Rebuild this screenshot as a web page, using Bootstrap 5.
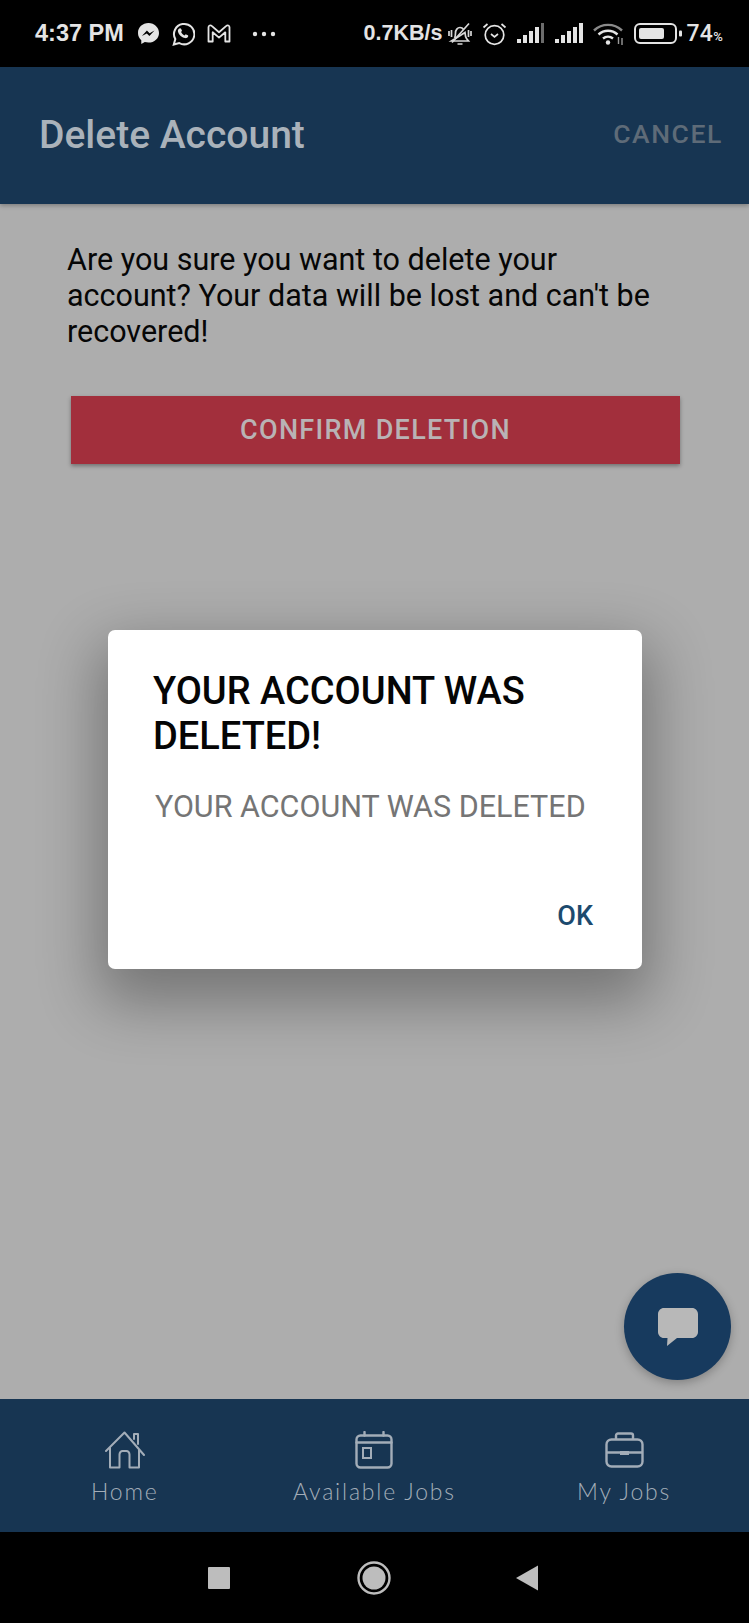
<!DOCTYPE html>
<html lang="en">
<head>
    <meta charset="UTF-8">
    <meta name="viewport" content="width=device-width, initial-scale=1.0">
    <title>Delete Account</title>
    <link href="https://cdn.jsdelivr.net/npm/bootstrap@5.3.0/dist/css/bootstrap.min.css" rel="stylesheet">
    <script src="https://cdn.jsdelivr.net/npm/bootstrap@5.3.0/dist/js/bootstrap.bundle.min.js"></script>
    <style>
        body {
            margin: 0;
            background: #000;
            font-family: Roboto, "Liberation Sans", sans-serif;
        }

        .phone {
            width: 749px;
            height: 1623px;
            overflow: hidden;
        }

        /* status bar */
        .status-bar {
            height: 67px;
            flex: none;
            background: #000;
            color: #e4e4e4;
            padding: 0 26px 0 35px;
            font-family: "Liberation Sans", sans-serif;
            font-weight: 700;
            font-size: 21.5px;
            line-height: 1;
        }

        .status-bar svg { display: block; }

        .status-left { gap: 12px; }
        .status-right { gap: 10px; }
        .status-time { font-size: 23.5px; margin-right: 1px; }
        .status-speed { margin-right: -4px; }
        .status-dots { margin-left: 9px; }
        .status-pct {
            font-family: Roboto, sans-serif;
            font-weight: 500;
            font-size: 23px;
            letter-spacing: .3px;
            margin-left: -7px;
        }
        .status-pct span { font-size: 13px; }

        /* app bar */
        .app-bar {
            height: 137px;
            flex: none;
            background: #173552;
            padding: 0 26px 0 39px;
            box-shadow: 0 2px 4px rgba(0, 0, 0, .25);
            position: relative;
            z-index: 1;
        }

        .app-title {
            font-size: 39px;
            font-weight: 500;
            color: #aab2ba;
            margin: 0;
        }

        .app-cancel {
            font-size: 26.5px;
            font-weight: 500;
            color: #5e6b78;
            letter-spacing: 1.6px;
            margin-bottom: 3px;
        }

        /* page behind the dialog */
        .page-body {
            background: #adadad;
            padding: 38px 69px 0 67px;
        }

        .warn-text {
            font-size: 30.5px;
            line-height: 36px;
            color: #060606;
            margin: 0 0 46px;
        }

        .btn-confirm {
            display: block;
            width: 609px;
            height: 68px;
            margin-left: 4px;
            background: #a22f3c;
            color: #b9b3b5;
            border: 0;
            border-radius: 0;
            font-size: 27px;
            font-weight: 500;
            letter-spacing: 1.3px;
            box-shadow: 0 2px 4px rgba(0, 0, 0, .35);
        }

        /* dialog */
        .alert-box {
            left: 108px;
            top: 630px;
            width: 534px;
            height: 339px;
            padding: 39px 40px 0 45px;
            background: #fff;
            border-radius: 7px;
            box-shadow: 0 24px 60px 10px rgba(0, 0, 0, .32);
            z-index: 2;
        }

        .alert-heading-text {
            font-size: 38px;
            font-weight: 500;
            line-height: 45px;
            color: #050505;
            margin: 0 0 28px;
        }

        .alert-body-text {
            font-size: 30.5px;
            line-height: 40px;
            color: #757575;
            margin: 0 0 0 2px;
        }

        .alert-ok {
            right: 49px;
            bottom: 37px;
            font-size: 27px;
            font-weight: 500;
            line-height: 32px;
            color: #1c4a6e;
        }

        /* chat button */
        .chat-fab {
            left: 624px;
            top: 1273px;
            width: 107px;
            height: 107px;
            background: #173a5e;
            box-shadow: 0 3px 10px rgba(0, 0, 0, .25);
            z-index: 1;
        }

        /* bottom tabs */
        .tab-bar {
            height: 133px;
            flex: none;
            background: #173552;
            padding-top: 32px;
        }

        .tab-bar svg { display: block; margin: 0 auto 8px; }

        .tab-label {
            font-family: Lato, sans-serif;
            font-weight: 300;
            font-size: 23px;
            line-height: 28px;
            letter-spacing: 1.8px;
            color: #a3adb8;
        }

        /* android nav */
        .sys-nav {
            height: 91px;
            flex: none;
            background: #000;
            padding-top: 27px;
        }
    </style>
</head>
<body>
    <div class="phone d-flex flex-column position-relative">

        <!-- Status bar -->
        <div class="status-bar d-flex align-items-center justify-content-between">
            <div class="status-left d-flex align-items-center">
                <span class="status-time">4:37 PM</span>
                <!-- messenger -->
                <svg width="23" height="23" viewBox="0 0 23 23"><path fill="#e4e4e4" d="M11.5 1C5.6 1 1 5.3 1 10.9c0 3 1.3 5.5 3.3 7.3V22l3.5-1.9c1.2.3 2.4.5 3.7.5 5.9 0 10.5-4.3 10.5-9.7S17.4 1 11.5 1z"/><path fill="#000" d="M4.9 14l5-5.4 2.7 2.6 4.9-2.6-5.1 5.500-2.600-2.700z"/></svg>
                <!-- whatsapp -->
                <svg width="23" height="24" viewBox="0 0 23 24"><path fill="none" stroke="#e4e4e4" stroke-width="2" d="M1.800 22.500l1.500-5.400a10.200 10.200 0 1 1 3.900 3.900z"/><path fill="#e4e4e4" d="M8 6.200c.6 0 .9.100 1.200.8l.8 1.800-.9 1.300c.7 1.500 1.800 2.500 3.400 3.300l1.200-1.200 2.100 1c.5.300.5.700.3 1.300-.5 1.200-1.700 1.800-3 1.600-3.600-.6-6.500-3.400-7.200-6.800-.2-1.300.5-2.600 2.100-3.100z"/></svg>
                <!-- gmail -->
                <svg width="24" height="19" viewBox="0 0 24 19"><path fill="none" stroke="#e4e4e4" stroke-width="1.800" stroke-linejoin="round" d="M1.500 3.200c0-1.700 2-2.400 3.200-1.300L12 8.300l7.300-6.400c1.200-1.100 3.200-.4 3.200 1.300v14.300h-4.200V8.300L12 13.600 5.700 8.300v9.200H1.500z"/></svg>
                <!-- more -->
                <svg class="status-dots" width="24" height="6" viewBox="0 0 24 6" fill="#e4e4e4"><circle cx="3" cy="3" r="2.200"/><circle cx="12" cy="3" r="2.200"/><circle cx="21" cy="3" r="2.200"/></svg>
            </div>
            <div class="status-right d-flex align-items-center">
                <span class="status-speed">0.7KB/s</span>
                <!-- muted bell -->
                <svg width="24" height="24" viewBox="0 0 24 24" fill="none" stroke="#d8d8d8" stroke-width="1.700"><path d="M6.500 16c1-1.500 1-2.500 1-5 0-3 2-5.500 4.500-5.500 1.500 0 2.800.8 3.600 2M17 10.500c.2 2.500.3 4.500 1.500 6l2 2.500h-17z"/><path d="M9.500 22h5M4 20.500L21 1.500M1 9v5M3.500 8v7M20.500 8v7M23 9v5"/></svg>
                <!-- alarm -->
                <svg width="25" height="24" viewBox="0 0 25 24" fill="none" stroke="#e4e4e4" stroke-width="1.700"><circle cx="12.500" cy="13" r="9.300"/><path d="M9 12l3.500 3 3.500-3M1.500 5.500l4-3.500M23.500 5.500l-4-3.500"/></svg>
                <!-- signal -->
                <svg width="28" height="21" viewBox="0 0 28 21" fill="#e4e4e4"><rect x="0" y="16" width="4" height="4"/><rect x="6" y="12" width="4" height="8"/><rect x="12" y="8" width="4" height="12"/><rect x="18" y="4" width="4" height="16"/><rect x="24" y="0" width="3" height="20" fill="#6c6c6c"/></svg>
                <svg width="28" height="21" viewBox="0 0 28 21" fill="#e4e4e4"><rect x="0" y="16" width="4" height="4"/><rect x="6" y="12" width="4" height="8"/><rect x="12" y="8" width="4" height="12"/><rect x="18" y="4" width="4" height="16"/><rect x="24" y="0" width="4" height="20"/></svg>
                <!-- wifi -->
                <svg width="31" height="22" viewBox="0 0 31 22" fill="none"><path stroke="#8a8a8a" stroke-width="2.400" d="M1 7.500c8-7.500 20-7.500 28 0"/><path stroke="#e4e4e4" stroke-width="2.400" d="M5.500 11.500c5.500-5 13.500-5 19 0M10 15.500c3-2.500 7-2.500 10 0"/><circle cx="15" cy="19.500" r="2.200" fill="#e4e4e4"/><path stroke="#9a9a9a" stroke-width="1.400" d="M25.500 14v7M29 15v7"/></svg>
                <!-- battery -->
                <svg width="49" height="21" viewBox="0 0 49 21"><rect x="1" y="1" width="41" height="19" rx="5" fill="none" stroke="#e4e4e4" stroke-width="2"/><rect x="5" y="5" width="25" height="11" rx="2" fill="#e4e4e4"/><rect x="45" y="7.500" width="3" height="6" rx="1" fill="#e4e4e4"/></svg>
                <span class="status-pct">74<span>%</span></span>
            </div>
        </div>

        <!-- App bar -->
        <div class="app-bar d-flex align-items-center justify-content-between">
            <h1 class="app-title">Delete Account</h1>
            <span class="app-cancel">CANCEL</span>
        </div>

        <!-- Page content -->
        <div class="page-body flex-grow-1">
            <p class="warn-text">Are you sure you want to delete your account? Your data will be lost and can't be recovered!</p>
            <button type="button" class="btn btn-confirm">CONFIRM DELETION</button>
        </div>

        <!-- Bottom tabs -->
        <div class="tab-bar row g-0 text-center">
            <div class="col-4">
                <svg width="40" height="38" viewBox="0 0 40 38" fill="none" stroke="#a3adb8" stroke-width="2" stroke-linejoin="round" stroke-linecap="round"><path d="M1 20L19.500 1.500 39 24"/><path d="M5 17v19.500h9.500V23.500c0-2 1.500-3.500 3-3.500h4c1.500 0 3 1.500 3 3.500v13H34V19"/><path d="M29 8V3h4v10"/></svg>
                <div class="tab-label">Home</div>
            </div>
            <div class="col-4">
                <svg width="38" height="38" viewBox="0 0 38 38" fill="none" stroke="#a3adb8" stroke-width="2.400" stroke-linecap="round"><rect x="1.500" y="4.500" width="35" height="32" rx="4"/><path d="M9.500 1v3.500M28.500 1v3.500M1.500 11.500h35"/><rect x="8" y="17" width="8" height="10" stroke-width="2"/></svg>
                <div class="tab-label">Available Jobs</div>
            </div>
            <div class="col-4">
                <svg width="39" height="38" viewBox="0 0 39 38" fill="none" stroke="#a3adb8" stroke-width="2.400"><rect x="1.500" y="8.500" width="36" height="27" rx="5"/><path d="M11 8.500V4.500c0-1 1-2 2-2h13c1 0 2 1 2 2v4M1.500 21.500h36"/><rect x="15" y="20" width="9" height="4" fill="#a3adb8" stroke="none"/></svg>
                <div class="tab-label">My Jobs</div>
            </div>
        </div>

        <!-- Android navigation -->
        <div class="sys-nav d-flex align-items-start">
            <svg width="749" height="40" viewBox="0 0 749 40" fill="#bdbdbd"><rect x="208" y="8" width="22" height="22" rx="1"/><circle cx="374" cy="19" r="15.500" fill="none" stroke="#bdbdbd" stroke-width="2.400"/><circle cx="374" cy="19" r="11.500"/><path d="M538 6.500v25L516 19z"/></svg>
        </div>

        <!-- Dialog -->
        <div class="alert-box position-absolute">
            <h2 class="alert-heading-text">YOUR ACCOUNT WAS DELETED!</h2>
            <p class="alert-body-text">YOUR ACCOUNT WAS DELETED</p>
            <span class="alert-ok position-absolute">OK</span>
        </div>

        <!-- Chat button -->
        <div class="chat-fab position-absolute rounded-circle d-flex align-items-center justify-content-center">
            <svg width="40" height="38" viewBox="0 0 40 38"><path fill="#b8b8b8" d="M6 0h28c3.300 0 6 2.700 6 6v18c0 3.300-2.700 6-6 6H19L9 38l.5-8H6c-3.300 0-6-2.700-6-6V6c0-3.300 2.700-6 6-6z"/></svg>
        </div>
    </div>
</body>
</html>
